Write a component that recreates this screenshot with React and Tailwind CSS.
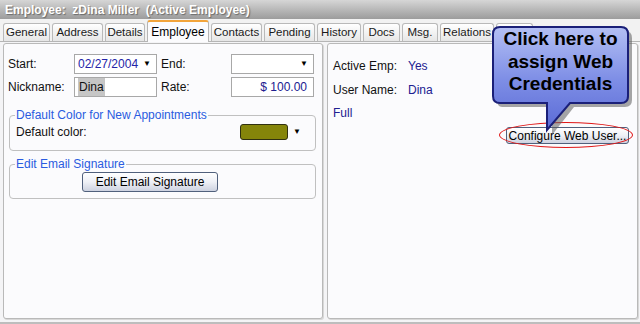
import React from "react";

const tabs = [
  ["General", "w-[47px]"],
  ["Address", "w-[51px]"],
  ["Details", "w-[40px]"],
  ["Employee", "w-[62px]", true],
  ["Contacts", "w-[51px]"],
  ["Pending", "w-[51px]"],
  ["History", "w-[44px]"],
  ["Docs", "w-[37px]"],
  ["Msg.", "w-[36px]"],
  ["Relations", "w-[54px]"],
  ["", "w-[37px]"],
];

function Tab({ label, w, active }) {
  if (active) {
    return (
      <div
        className={`${w} h-[22px] -mb-px relative z-10 flex items-center justify-center rounded-t-[3px] border border-b-0 border-[#b5b5b5] border-t-2 border-t-[#f2a43a] bg-[#fbfbfd] text-[12px] text-black`}
      >
        {label}
      </div>
    );
  }
  return (
    <div
      className={`${w} h-[18px] flex items-center justify-center rounded-t-[3px] border border-b-0 border-[#b9b9b9] bg-gradient-to-b from-[#ffffff] to-[#e6e6e6] text-[11.5px] text-[#1a1a1a] whitespace-nowrap overflow-hidden`}
    >
      {label}
    </div>
  );
}

function Input({ children, className = "", arrow }) {
  return (
    <div
      className={`h-[20px] flex items-center border border-[#a8a8a8] bg-white px-[3px] text-[12px] ${className}`}
    >
      <div className="flex-1 flex items-center">{children}</div>
      {arrow && <span className="text-[8px] text-black pr-[2px]">▼</span>}
    </div>
  );
}

function Button({ children, className = "" }) {
  return (
    <div
      className={`flex items-center justify-center rounded-[3px] border border-[#50607c] bg-gradient-to-b from-[#ffffff] via-[#eef0f6] to-[#cdd2e0] text-[12px] text-black ${className}`}
    >
      {children}
    </div>
  );
}

export default function App() {
  return (
    <div
      className="relative w-[640px] h-[324px] overflow-hidden bg-[#cfcfcf] flex flex-col"
      style={{ fontFamily: '"Liberation Sans", Arial, sans-serif' }}
    >
      {/* title bar */}
      <div className="h-[19px] bg-gradient-to-b from-[#d6d6d6] to-[#9c9c9c] flex items-center pl-[5px]">
        <span
          className="text-white font-bold text-[12px] whitespace-pre"
          style={{ textShadow: "1px 1px 1px #6a6a6a" }}
        >
          Employee:  zDina Miller  (Active Employee)
        </span>
      </div>

      {/* tabs */}
      <div className="h-[23px] bg-[#f2f2f2] flex items-end pl-[3px] gap-[2px] border-b border-[#b5b5b5]">
        {tabs.map(([l, w, a], i) => (
          <Tab key={i} label={l} w={w} active={a} />
        ))}
      </div>

      {/* content */}
      <div className="flex-1 bg-[#f4f4f6] flex gap-[4px] pl-[3px] pr-[2px] pt-[1px] pb-[3px] border-b-[2px] border-[#bdbdbd]">
        {/* left panel */}
        <div className="w-[320px] rounded-[3px] border border-[#b9b9b9] bg-[#fbfbfd] px-[4px] pt-[10px] shadow-[1px_1px_0_#d8d8d8]">
          <div className="flex items-center">
            <span className="w-[66px] text-[12px] text-[#111]">Start:</span>
            <Input className="w-[83px] text-[#2424a8]" arrow>
              02/27/2004
            </Input>
            <span className="w-[74px] pl-[4px] text-[12px] text-[#111]">End:</span>
            <Input className="w-[83px]" arrow></Input>
          </div>
          <div className="flex items-center mt-[3px]">
            <span className="w-[66px] text-[12px] text-[#111]">Nickname:</span>
            <Input className="w-[83px]">
              <span className="bg-[#c6c6c6] text-[#111] px-px">Dina</span>
            </Input>
            <span className="w-[74px] pl-[4px] text-[12px] text-[#111]">Rate:</span>
            <Input className="w-[83px] text-[#202090] justify-end">
              <span className="ml-auto pr-[3px]">$ 100.00</span>
            </Input>
          </div>

          <fieldset className="mt-[12px] mx-[1px] w-[307px] h-[42px] rounded-[4px] border border-[#c0c0c0] px-[6px]">
            <legend className="text-[12px] text-[#2a5be0] px-px -ml-px leading-[12px]">
              Default Color for New Appointments
            </legend>
            <div className="flex items-center mt-[2px]">
              <span className="text-[12px] text-[#111] flex-1">Default color:</span>
              <div className="w-[48px] h-[16px] rounded-[3px] border border-[#303010] bg-[#85850a]" />
              <span className="text-[8px] ml-[5px] mr-[8px]">▼</span>
            </div>
          </fieldset>

          <fieldset className="mt-[7px] mx-[1px] w-[307px] h-[41px] rounded-[4px] border border-[#c0c0c0] px-[6px]">
            <legend className="text-[12px] text-[#2a5be0] px-px -ml-px leading-[12px]">
              Edit Email Signature
            </legend>
            <div className="pl-[66px] mt-[2px]">
              <Button className="w-[136px] h-[20px]">Edit Email Signature</Button>
            </div>
          </fieldset>
        </div>

        {/* right panel */}
        <div className="flex-1 rounded-[3px] border border-[#b9b9b9] bg-[#fbfbfd] pl-[5px] pr-[8px] pt-[12px] shadow-[1px_1px_0_#d8d8d8]">
          <div className="flex items-center h-[20px]">
            <span className="w-[75px] text-[12px] text-[#111]">Active Emp:</span>
            <span className="text-[12px] text-[#202090] flex-1">Yes</span>
            <Button className="w-[60px] h-[20px]"> </Button>
          </div>
          <div className="flex items-center h-[20px] mt-[4px]">
            <span className="w-[75px] text-[12px] text-[#111]">User Name:</span>
            <span className="text-[12px] text-[#202090] flex-1">Dina</span>
            <Button className="w-[60px] h-[20px]"> </Button>
          </div>
          <div className="h-[20px] flex items-center mt-[3px]">
            <span className="text-[12px] text-[#202090]">Full</span>
          </div>
          <div className="flex justify-end mt-[4px]">
            <Button className="w-[123px] h-[17px]">Configure Web User...</Button>
          </div>
        </div>
      </div>

      {/* red ellipse highlight */}
      <div className="absolute left-[499px] top-[122px] w-[134px] h-[26px] rounded-[50%] border-[1.5px] border-[#e01818]" />

      {/* callout */}
      <div className="absolute left-[490px] top-[23px] w-[145px] h-[112px]">
        <svg width="145" height="112" className="absolute inset-0">
          <defs>
            <linearGradient id="cg" x1="0" y1="0" x2="0" y2="1">
              <stop offset="0" stopColor="#b4c0f4" />
              <stop offset="0.5" stopColor="#7f8fe6" />
              <stop offset="1" stopColor="#5a6ad6" />
            </linearGradient>
          </defs>
          <path
            d="M10 6 H133 Q140 6 140 13 V75 Q140 82 133 82 H82 L60 110 L60 82 H10 Q5 82 5 75 V13 Q5 6 10 6 Z"
            fill="#5c5c5c"
            opacity="0.55"
            transform="translate(2 2)"
          />
          <path
            d="M10 4 H131 Q138 4 138 11 V73 Q138 80 131 80 H80 L57 107 L57 80 H10 Q3 80 3 73 V11 Q3 4 10 4 Z"
            fill="url(#cg)"
            stroke="#1a1f78"
            strokeWidth="2"
          />
        </svg>
        <div className="absolute left-[3px] top-[5px] w-[135px] text-center text-[19px] leading-[22.5px] font-bold text-black">
          Click here to
          <br />
          assign Web
          <br />
          Credentials
        </div>
      </div>
    </div>
  );
}
